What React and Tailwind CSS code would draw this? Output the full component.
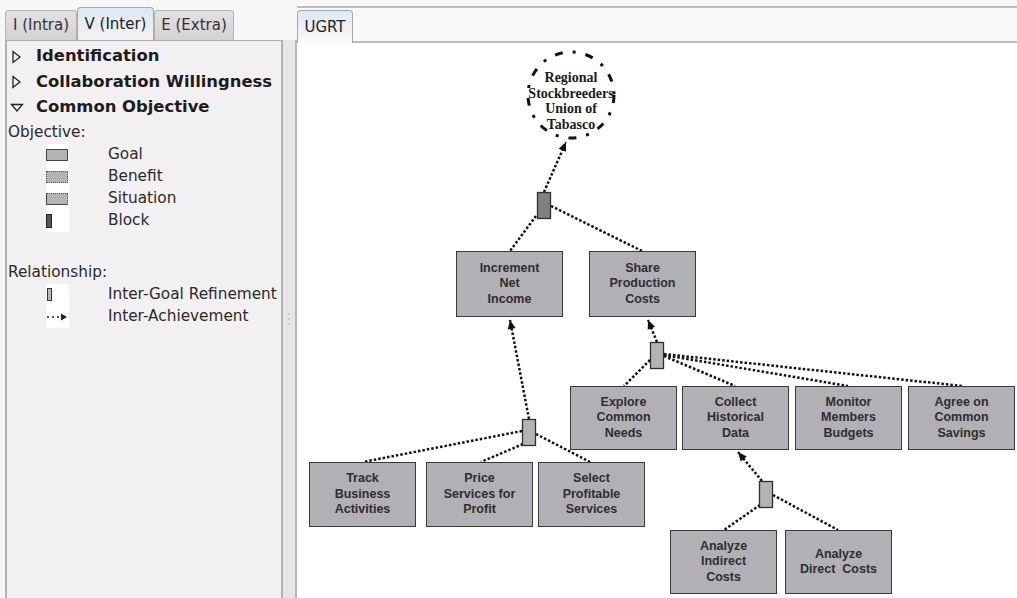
import React from "react";

const nodes = [
  { l: 159, t: 208, h: 66, lines: ["Increment", "Net", "Income"] },
  { l: 292, t: 208, h: 66, lines: ["Share", "Production", "Costs"] },
  { l: 273, t: 343, h: 64, lines: ["Explore", "Common", "Needs"] },
  { l: 385, t: 343, h: 64, lines: ["Collect", "Historical", "Data"] },
  { l: 498, t: 343, h: 64, lines: ["Monitor", "Members", "Budgets"] },
  { l: 611, t: 343, h: 64, lines: ["Agree on", "Common", "Savings"] },
  { l: 12, t: 419, h: 65, lines: ["Track", "Business", "Activities"] },
  { l: 129, t: 419, h: 65, lines: ["Price", "Services for", "Profit"] },
  { l: 241, t: 419, h: 65, lines: ["Select", "Profitable", "Services"] },
  { l: 373, t: 487, h: 64, lines: ["Analyze", "Indirect", "Costs"] },
  { l: 488, t: 487, h: 64, lines: ["Analyze", "Direct  Costs"] },
];

// refinement blocks, page coords
const blocks = [
  { x: 537, y: 192, dark: true },
  { x: 650, y: 342 },
  { x: 522, y: 419 },
  { x: 759, y: 481 },
];

// dotted links, page coords
const links = [
  [536, 216, 510, 251],
  [551, 206, 642, 251],
  [650, 360, 624, 386],
  [664, 356, 735, 386],
  [664, 355, 848, 386],
  [664, 354, 962, 386],
  [522, 431, 363, 462],
  [523, 444, 481, 462],
  [536, 434, 590, 462],
  [760, 505, 724, 530],
  [773, 495, 838, 530],
];

// achievement arrows (from -> to, head at "to")
const arrows = [
  [544, 192, 566, 142],
  [657, 342, 648, 320],
  [529, 419, 510, 320],
  [762, 481, 738, 452],
];

function Head({ x1, y1, x2, y2 }) {
  const a = Math.atan2(y2 - y1, x2 - x1);
  const len = 9;
  const w = 4;
  const bx = x2 - len * Math.cos(a);
  const by = y2 - len * Math.sin(a);
  const px = -Math.sin(a) * w;
  const py = Math.cos(a) * w;
  return <polygon points={`${x2},${y2} ${bx + px},${by + py} ${bx - px},${by - py}`} fill="#111" />;
}

function Diagram() {
  return (
    <div className="relative flex-1 bg-white overflow-hidden">
      <svg className="absolute inset-0" width="720" height="555" viewBox="297 43 720 555">
        <circle cx="571" cy="95" r="43" fill="none" stroke="#111" strokeWidth="3" strokeDasharray="8 10 3 10" />
        {links.map(([x1, y1, x2, y2], i) => (
          <line key={i} x1={x1} y1={y1} x2={x2} y2={y2} stroke="#111" strokeWidth="2.5" strokeDasharray="2.5 2" />
        ))}
        {arrows.map(([x1, y1, x2, y2], i) => (
          <g key={i}>
            <line x1={x1} y1={y1} x2={x2} y2={y2} stroke="#111" strokeWidth="2.5" strokeDasharray="2.5 2" />
            <Head x1={x1} y1={y1} x2={x2} y2={y2} />
          </g>
        ))}
        {blocks.map((b, i) => (
          <rect key={i} x={b.x + 0.5} y={b.y + 0.5} width="13" height="26" fill={b.dark ? "#808080" : "#b3b2b7"} stroke="#2e2e2e" strokeWidth="1.3" />
        ))}
      </svg>

      <div
        className="absolute left-[220px] top-[27px] w-[108px] text-center text-[14px] leading-[15.5px] font-bold text-[#1a1a1a]"
        style={{ fontFamily: '"Liberation Serif", serif' }}
      >
        <div>Regional</div>
        <div>Stockbreeders</div>
        <div>Union of</div>
        <div>Tabasco</div>
      </div>

      {nodes.map((n, i) => (
        <div
          key={i}
          className="absolute w-[107px] flex flex-col items-center justify-center bg-[#b1b0b5] border-[1.5px] border-[#3a3a3a] text-[12.5px] leading-[15.5px] font-bold text-[#2e2e2e] whitespace-pre"
          style={{ left: n.l, top: n.t, height: n.h, fontFamily: '"Liberation Sans", Arial, sans-serif' }}
        >
          {n.lines.map((s, j) => (
            <div key={j}>{s}</div>
          ))}
        </div>
      ))}
    </div>
  );
}

function LegendRow({ icon, label }) {
  return (
    <div className="flex items-center h-[22px]">
      <div className="ml-[39px] w-[23px] h-[22px] bg-white flex items-center">{icon}</div>
      <span className="ml-[39px]">{label}</span>
    </div>
  );
}

function TreeRow({ open, label }) {
  return (
    <div className="flex items-center h-[25.5px]">
      <svg width="14" height="14" viewBox="0 0 14 14" className="ml-[3px] mr-[12px]">
        {open ? (
          <polygon points="1.5,3.5 12.5,3.5 7,10" fill="none" stroke="#222" strokeWidth="1.3" />
        ) : (
          <polygon points="3,1.5 10,7 3,12.5" fill="none" stroke="#222" strokeWidth="1.3" />
        )}
      </svg>
      <span className="font-bold text-[16.4px] text-[#1c1c1c]">{label}</span>
    </div>
  );
}

export default function App() {
  return (
    <div
      className="w-[1017px] h-[598px] flex bg-[#f7f7f7] overflow-hidden text-[#2a2a2a]"
      style={{ fontFamily: '"DejaVu Sans", sans-serif' }}
    >
      {/* left dock */}
      <div className="w-[283px] flex flex-col pl-[5px] pt-[7px]">
        <div className="flex items-end h-[33px] text-[15px]">
          <div className="w-[72px] h-[30px] flex items-center justify-center border border-b-0 border-[#b4b4b4] rounded-t-[4px] bg-gradient-to-b from-[#e2e0e0] to-[#d4d2d2] text-[#333]">
            I (Intra)
          </div>
          <div className="w-[77px] h-[33px] flex items-center justify-center border border-b-0 border-[#a8a8a8] rounded-t-[4px] bg-gradient-to-b from-[#dde8f2] to-[#f3f2f2] text-[#222]">
            V (Inter)
          </div>
          <div className="w-[80px] h-[30px] flex items-center justify-center border border-b-0 border-[#b4b4b4] rounded-t-[4px] bg-gradient-to-b from-[#e2e0e0] to-[#d4d2d2] text-[#333]">
            E (Extra)
          </div>
        </div>
        <div className="flex-1 bg-[#f2f0f0] border-l-2 border-t border-r-2 border-[#b2b0b0] pt-[3px] text-[15.3px]">
          <TreeRow label="Identification" />
          <TreeRow label="Collaboration Willingness" />
          <TreeRow open label="Common Objective" />
          <div className="ml-[1px] mt-[1px] h-[22px] flex items-center">Objective:</div>
          <LegendRow
            label="Goal"
            icon={<div className="w-[22px] h-[12px] bg-[#b4b4b4] border border-[#444]" />}
          />
          <LegendRow
            label="Benefit"
            icon={<div className="w-[22px] h-[12px] bg-[#b4b4b4] border border-dotted border-[#555]" />}
          />
          <LegendRow
            label="Situation"
            icon={<div className="w-[22px] h-[12px] bg-[#b4b4b4] border border-dotted border-[#555] border-l-[#444] border-b-[#444]" style={{ borderLeftStyle: "solid", borderBottomStyle: "solid" }} />}
          />
          <LegendRow
            label="Block"
            icon={<div className="w-[6px] h-[14px] bg-[#555] border border-[#222]" />}
          />
          <div className="h-[30px]" />
          <div className="ml-[1px] h-[22px] flex items-center">Relationship:</div>
          <LegendRow
            label="Inter-Goal Refinement"
            icon={<div className="ml-[1px] w-[5px] h-[13px] bg-[#bbb] border border-[#333]" />}
          />
          <LegendRow
            label="Inter-Achievement"
            icon={
              <svg width="22" height="10" viewBox="0 0 22 10">
                <line x1="1" y1="5" x2="16" y2="5" stroke="#222" strokeWidth="1.5" strokeDasharray="2 3" />
                <polygon points="21,5 15,1.5 15,8.5" fill="#222" />
              </svg>
            }
          />
        </div>
      </div>

      {/* splitter */}
      <div className="w-[14px] bg-[#e7e5e5] border-r-2 border-[#b8b6b6] flex flex-col items-center justify-center gap-[3px] mt-[40px]">
        <div className="w-[2px] h-[2px] bg-[#cfcfcf]" />
        <div className="w-[2px] h-[2px] bg-[#cfcfcf]" />
        <div className="w-[2px] h-[2px] bg-[#cfcfcf]" />
      </div>

      {/* editor */}
      <div className="flex-1 flex flex-col pt-[6px]">
        <div className="h-[37px] flex items-end border-t-2 border-b-2 border-[#bcbcbc] bg-[#f8f8f8]">
          <div className="w-[56px] h-[33px] -mb-[2px] flex items-center justify-center border border-b-0 border-[#a8a8a8] rounded-t-[4px] bg-gradient-to-b from-[#dde8f2] to-[#fafafa] text-[15px] text-[#222]">
            UGRT
          </div>
        </div>
        <Diagram />
      </div>
    </div>
  );
}
